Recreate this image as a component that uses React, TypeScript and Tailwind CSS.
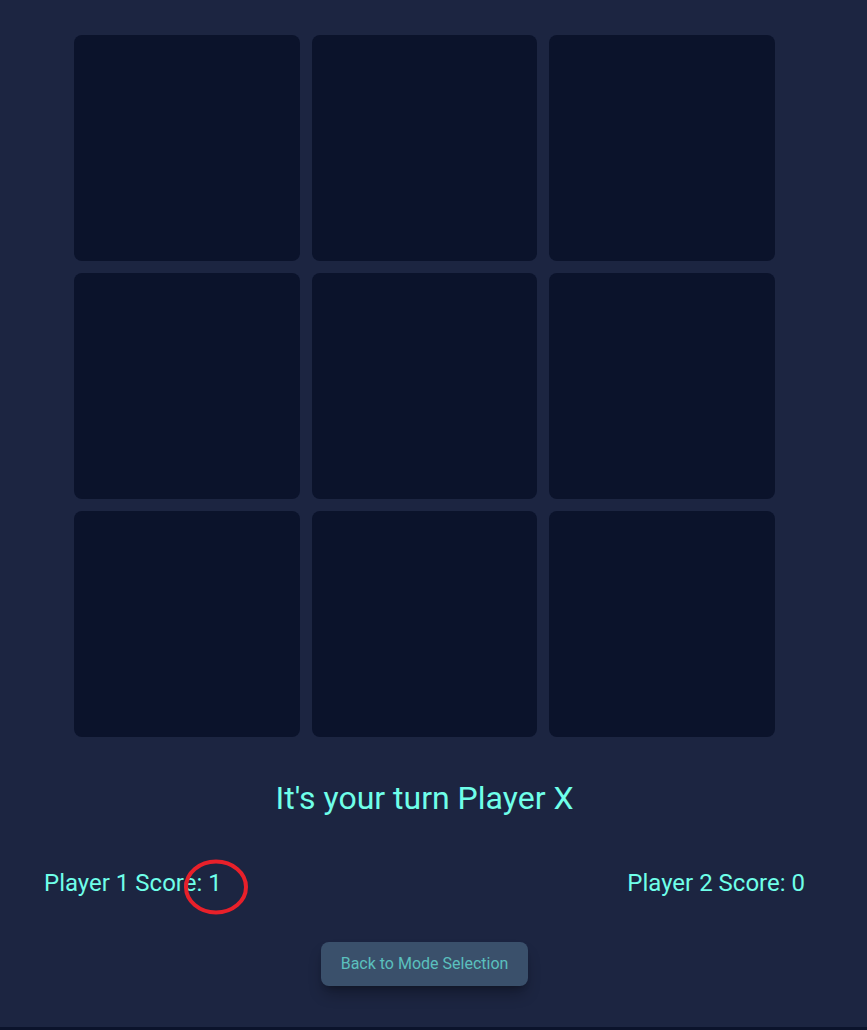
import React from 'react'

const cells = Array.from({ length: 9 }, (_, i) => i)

export default function App() {
  return (
    <div className="min-h-screen w-full bg-[#0b132b]" style={{ fontFamily: 'Roboto, "Liberation Sans", sans-serif' }}>
      <div className="h-[1027px] w-full bg-[#1c2541]">
        <div className="relative flex w-[849px] flex-col items-center pt-[35px]">
          <div className="grid w-[701px] grid-cols-3 gap-3">
            {cells.map((c) => (
              <button key={c} className="h-[226px] rounded-lg bg-[#0b132b]" />
            ))}
          </div>

          <h2 className="mt-[41px] text-[32px] leading-[40px] text-[#6fffe9]">It's your turn Player X</h2>

          <div className="mt-[49px] flex w-full items-center justify-between px-11 text-[24px] leading-[32px] text-[#6fffe9]">
            <span className="relative">
              Player 1 Score: 1
              <svg
                className="pointer-events-none absolute left-[139px] top-[-8px]"
                width="66"
                height="56"
                viewBox="0 0 66 56"
              >
                <ellipse cx="33" cy="28" rx="30" ry="25.5" fill="none" stroke="#e8202a" strokeWidth="4" />
              </svg>
            </span>
            <span>Player 2 Score: 0</span>
          </div>

          <button className="mt-[43px] h-[44px] w-[207px] rounded-lg bg-[#3a506b] text-[16px] text-[#5bc0be] shadow-lg shadow-black/30">
            Back to Mode Selection
          </button>
        </div>
      </div>
    </div>
  )
}
